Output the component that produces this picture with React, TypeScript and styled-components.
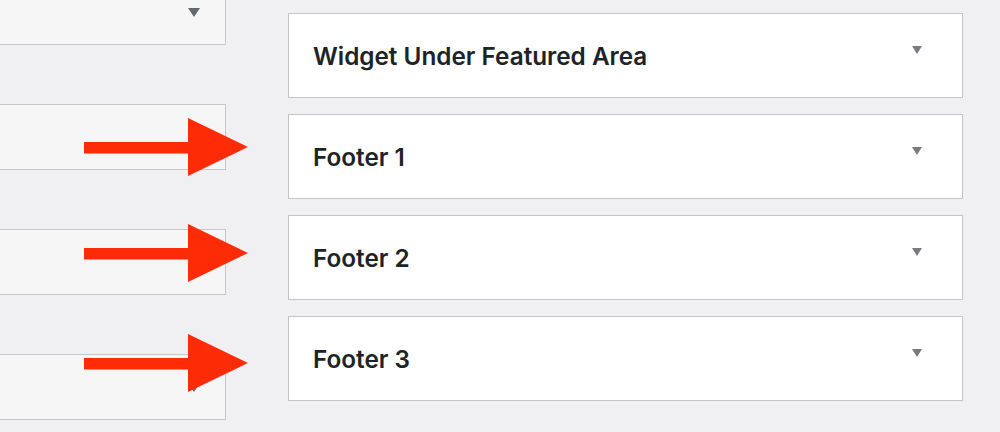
import React from "react";
import styled, { createGlobalStyle } from "styled-components";

const GlobalStyle = createGlobalStyle`
  html, body {
    margin: 0;
    padding: 0;
    background: #f0f0f2;
    font-family: Inter, "Noto Sans", "Liberation Sans", sans-serif;
    overflow: hidden;
  }
`;

const Page = styled.div`
  position: relative;
  width: 1000px;
  height: 432px;
  overflow: hidden;
  display: flex;
  gap: 62px;
`;

const LeftColumn = styled.div`
  margin-left: -24px;
  margin-top: -21px;
  width: 250px;
  display: flex;
  flex-direction: column;
  gap: 59px;
`;

const RightColumn = styled.div`
  margin-top: 13px;
  width: 675px;
  display: flex;
  flex-direction: column;
  gap: 16px;
`;

const InactiveBox = styled.div`
  box-sizing: border-box;
  height: 66px;
  background: #f6f6f7;
  border: 1px solid #c6c7ca;
  display: flex;
  align-items: flex-start;
  justify-content: flex-end;
  padding: 28px 25px 0 0;
`;

const AreaBox = styled.div`
  position: relative;
  box-sizing: border-box;
  height: 85px;
  background: #fff;
  border: 1px solid #c3c4c7;
  display: flex;
  align-items: center;
  padding: 0 24px;
`;

const AreaTitle = styled.h3`
  margin: 0;
  font-size: 24.3px;
  font-weight: 600;
  color: #1d2327;
  letter-spacing: 0;
`;

const Chevron = styled.span<{ $size: number; $color: string }>`
  width: 0;
  height: 0;
  border-left: ${(p) => p.$size / 2}px solid transparent;
  border-right: ${(p) => p.$size / 2}px solid transparent;
  border-top: ${(p) => Math.round(p.$size * 0.75)}px solid ${(p) => p.$color};
`;

const AreaChevron = styled(Chevron)`
  position: absolute;
  top: 32px;
  right: 40px;
`;

const ArrowWrap = styled.svg<{ $top: number }>`
  position: absolute;
  left: 84px;
  top: ${(p) => p.$top}px;
`;

const Arrow = ({ top }: { top: number }) => (
  <ArrowWrap $top={top} width="166" height="60" viewBox="0 0 166 60">
    <polygon
      points="0,24 104,24 104,0 164,29 104,58 104,35.5 0,35.5"
      fill="#fd2c06"
    />
  </ArrowWrap>
);

const areas = ["Widget Under Featured Area", "Footer 1", "Footer 2", "Footer 3"];

export default function App() {
  return (
    <Page>
      <GlobalStyle />
      <LeftColumn>
        {[0, 1, 2, 3].map((i) => (
          <InactiveBox key={i}>
            <Chevron $size={12} $color="#646970" />
          </InactiveBox>
        ))}
      </LeftColumn>
      <RightColumn>
        {areas.map((name) => (
          <AreaBox key={name}>
            <AreaTitle>{name}</AreaTitle>
            <AreaChevron $size={10} $color="#787c82" />
          </AreaBox>
        ))}
      </RightColumn>
      <Arrow top={118} />
      <Arrow top={224} />
      <Arrow top={334} />
    </Page>
  );
}
